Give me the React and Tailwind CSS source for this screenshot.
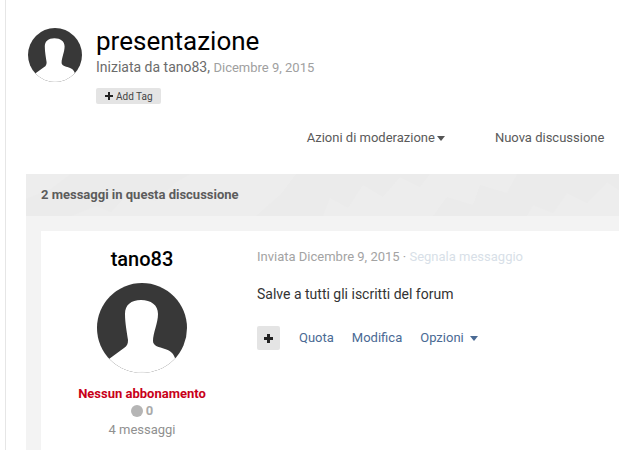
const Silhouette = () => (
  <svg viewBox="0 0 90 90" className="w-full h-full block">
    <defs>
      <clipPath id="c"><circle cx="45" cy="45" r="45" /></clipPath>
    </defs>
    <g clipPath="url(#c)">
      <rect width="90" height="90" fill="#383838" />
      <path fill="#fff" d="M44 17C34 17 28 22 28 31C28 40 30 50 31 57C31 61 30 63 27 65L12 76L12 92L79 92L78 75C76 70 74 68 68 66C62 64 56 63 56 58C56 50 61 40 61 31C61 22 54 17 44 17Z" />
      <ellipse cx="45" cy="90" rx="9" ry="1.2" fill="#e6e6e6" />
    </g>
  </svg>
);

const Pattern = () => (
  <svg viewBox="0 0 593 42" className="absolute inset-0 w-full h-full" aria-hidden="true">
    <g fill="#ededed">
      <polygon points="0,0 45,0 25,15 0,25" />
      <polygon points="45,42 70,32 85,38 105,17 130,27 150,8 165,0 270,0 255,20 230,42" />
      <polygon points="297,42 304,24 322,34 337,11 357,23 374,3 394,13 404,0 491,0 481,19 454,11 447,31 421,23 407,42" />
      <polygon points="501,42 507,31 527,39 541,19 561,29 581,8 593,16 593,42" />
    </g>
  </svg>
);

export default function App() {
  return (
    <div className="w-[619px] h-[450px] overflow-hidden bg-white font-['Roboto',sans-serif] relative">
      <div className="ml-[5px] w-[614px] h-full border-l border-[#e6e6e6] pl-[20px]">
        <header className="flex pt-[28px] pl-[2px]">
          <div className="w-[54px] h-[54px] shrink-0"><Silhouette /></div>
          <div className="ml-[14px]">
            <h1 className="text-[26px] leading-[26px] text-black">presentazione</h1>
            <p className="mt-[4px] text-[14px] leading-[18px] text-[#6b6b6b]">
              Iniziata da tano83, <span className="text-[13px] text-[#a0a0a0]">Dicembre 9, 2015</span>
            </p>
            <span className="mt-[11px] flex items-center gap-[3px] w-[65px] h-[16px] rounded-[2px] bg-[#e4e4e4] pl-[9px] text-[10px] text-[#444]">
              <svg viewBox="0 0 8 8" className="w-[8px] h-[8px]"><path d="M3 0h2v3h3v2H5v3H3V5H0V3h3z" fill="#222" /></svg>
              Add Tag
            </span>
          </div>
        </header>

        <nav className="flex justify-end items-center h-[20px] mt-[24px] text-[13px] text-[#5a5a5a]">
          <span className="flex items-center gap-[2px]">
            Azioni di moderazione
            <svg viewBox="0 0 8 5" className="w-[8px] h-[5px]"><path d="M0 0h8L4 5z" fill="#555" /></svg>
          </span>
          <span className="ml-[50px] mr-[14.6px]">Nuova discussione</span>
        </nav>

        <section className="mt-[26px] bg-[#f3f3f3] pl-[15px] pb-[30px]">
          <div className="-ml-[15px] relative h-[42px] flex items-center pl-[15px] text-[13px] font-bold text-[#5c5c5c] bg-[#ebebeb]">
            <Pattern />
            <span className="relative">2 messaggi in questa discussione</span>
          </div>
          <article className="mt-[15px] bg-white flex h-[240px]">
            <aside className="w-[202px] shrink-0 flex flex-col items-center pt-[14px]">
              <h3 className="text-[20px] leading-[28px] font-medium text-black">tano83</h3>
              <div className="w-[90px] h-[90px] mt-[10px]"><Silhouette /></div>
              <div className="mt-[12px] text-[13px] leading-[18px] font-bold text-[#c8001a]">Nessun abbonamento</div>
              <div className="flex items-center gap-[3px] text-[13px] leading-[16px] font-bold text-[#aaa]">
                <span className="w-[12px] h-[12px] rounded-full bg-[#b5b5b5]" />0
              </div>
              <div className="mt-[2px] text-[13px] leading-[18px] text-[#909090]">4 messaggi</div>
            </aside>
            <div className="flex-1 pl-[14px] pt-[17px]">
              <p className="text-[13px] leading-[18px] text-[#a3a3a3]">
                Inviata Dicembre 9, 2015 · <span className="text-[#d8dfe8]">Segnala messaggio</span>
              </p>
              <p className="mt-[18px] text-[14px] leading-[20px] text-[#333]">Salve a tutti gli iscritti del forum</p>
              <div className="mt-[22px] flex items-center text-[13px] text-[#4a6a94]">
                <span className="w-[23px] h-[24px] rounded-[2px] bg-[#e4e4e4] flex items-center justify-center">
                  <svg viewBox="0 0 9 9" className="w-[9px] h-[9px]"><path d="M3 0h3v3h3v3H6v3H3V6H0V3h3z" fill="#222" /></svg>
                </span>
                <span className="ml-[19px]">Quota</span>
                <span className="ml-[18px]">Modifica</span>
                <span className="ml-[18px] flex items-center gap-[6px]">
                  Opzioni
                  <svg viewBox="0 0 8 5" className="w-[8px] h-[5px]"><path d="M0 0h8L4 5z" fill="#4a6a94" /></svg>
                </span>
              </div>
            </div>
          </article>
        </section>
      </div>
    </div>
  );
}
